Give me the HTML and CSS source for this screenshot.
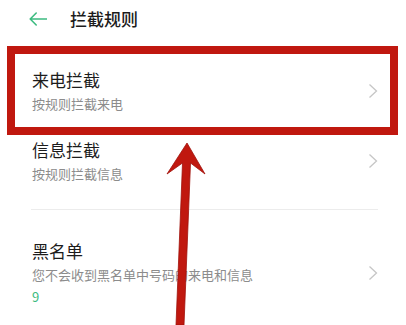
FILE: index.html
```html
<!DOCTYPE html>
<html lang="zh-CN">
<head>
<meta charset="utf-8">
<title>拦截规则</title>
<link rel="stylesheet" href="styles.css">
</head>
<body>
<div class="page">
  <header class="topbar">
    <svg class="back" width="18" height="14" viewBox="0 0 18 14"><path d="M17.5 7 H1.2 M7.2 1 L1.2 7 L7.2 13" fill="none" stroke="#3dbb80" stroke-width="1.6" stroke-linecap="round" stroke-linejoin="round"/></svg>
    <h1 class="title">拦截规则</h1>
  </header>
  <section class="group first">
    <div class="item">
      <div class="text">
        <div class="name">来电拦截</div>
        <div class="desc">按规则拦截来电</div>
      </div>
      <svg class="chev" width="10" height="16" viewBox="0 0 10 16"><path d="M1.5 1.5 L8.5 8 L1.5 14.5" fill="none" stroke="#c6c6c6" stroke-width="1.3"/></svg>
    </div>
    <div class="item">
      <div class="text">
        <div class="name">信息拦截</div>
        <div class="desc">按规则拦截信息</div>
      </div>
      <svg class="chev" width="10" height="16" viewBox="0 0 10 16"><path d="M1.5 1.5 L8.5 8 L1.5 14.5" fill="none" stroke="#c6c6c6" stroke-width="1.3"/></svg>
    </div>
  </section>
  <div class="divider"></div>
  <section class="group second">
    <div class="item">
      <div class="text">
        <div class="name">黑名单</div>
        <div class="desc">您不会收到黑名单中号码的来电和信息</div>
        <div class="count">9</div>
      </div>
      <svg class="chev" width="10" height="16" viewBox="0 0 10 16"><path d="M1.5 1.5 L8.5 8 L1.5 14.5" fill="none" stroke="#c6c6c6" stroke-width="1.3"/></svg>
    </div>
  </section>
  <div class="highlight"></div>
  <svg class="pointer" width="406" height="325" viewBox="0 0 406 325">
    <path d="M187 143 L205 174 L190.5 163 L184 325 L176 325 L182.5 163 L167 174 Z" fill="#c0180f" stroke="#a0120b" stroke-width="0.8" stroke-linejoin="miter"/>
  </svg>
</div>
</body>
</html>
```
FILE: styles.css
```css
html, body {
  margin: 0;
  padding: 0;
  background: #ffffff;
}
.page {
  position: relative;
  width: 406px;
  height: 325px;
  overflow: hidden;
  font-family: "Noto Sans CJK SC", "Noto Sans", sans-serif;
  background: #ffffff;
}
.topbar {
  height: 40px;
  display: flex;
  align-items: center;
  padding-left: 29px;
  box-sizing: border-box;
  padding-bottom: 2px;
}
.back {
  display: block;
}
.title {
  margin: 0 0 0 23px;
  font-size: 17px;
  font-weight: 500;
  color: #1c1c1c;
  line-height: 24px;
}
.group.first {
  margin-top: 15px;
  padding-bottom: 14px;
}
.item {
  display: flex;
  align-items: center;
  padding: 14px 28px 12px 32px;
}
.text {
  flex: 1;
  display: flex;
  flex-direction: column;
}
.name {
  font-size: 17px;
  line-height: 22px;
  color: #1c1c1c;
}
.desc {
  margin-top: 4px;
  font-size: 13px;
  line-height: 18px;
  color: #8c8c8c;
}
.count {
  margin-top: 4px;
  font-size: 13px;
  line-height: 18px;
  color: #3dbb80;
}
.chev {
  display: block;
  flex: none;
}
.divider {
  height: 1px;
  background: #ececec;
  margin: 0 28px 0 31px;
}
.group.second .item {
  padding-top: 30px;
}
.highlight {
  position: absolute;
  left: 7px;
  top: 46px;
  width: 391px;
  height: 89px;
  box-sizing: border-box;
  border: 8px solid #c0180f;
}
.pointer {
  position: absolute;
  left: 0;
  top: 0;
}
```
